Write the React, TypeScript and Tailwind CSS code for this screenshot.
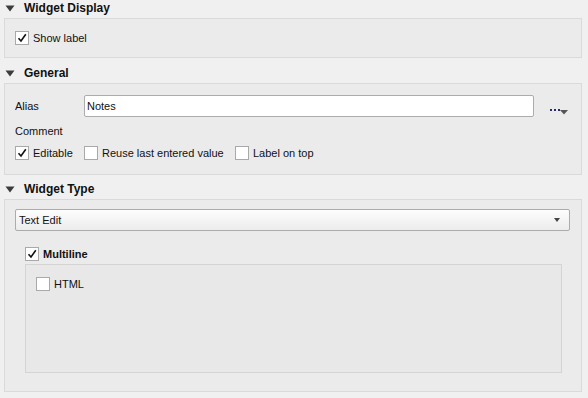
const font = { fontFamily: '"Liberation Sans", Arial, sans-serif' };

function Triangle() {
  return (
    <svg width="10" height="10" viewBox="0 0 10 10" className="shrink-0">
      <polygon points="0.5,1.5 9.5,1.5 5,7.5" fill="#3c3c3c" />
    </svg>
  );
}

function Check({ checked }: { checked: boolean }) {
  return (
    <span className="flex h-[14px] w-[14px] shrink-0 items-center justify-center border border-[#a9a9a9] bg-white">
      {checked && (
        <svg width="10" height="10" viewBox="0 0 10 10">
          <path d="M1.5 5.2 L4 8 L8.8 1.2" fill="none" stroke="#111" strokeWidth="1.6" />
        </svg>
      )}
    </span>
  );
}

function CheckRow({ label, checked, bold }: { label: string; checked: boolean; bold?: boolean }) {
  return (
    <div className="flex h-[14px] items-center gap-[4px] leading-[14px]">
      <Check checked={checked} />
      <span className={`text-[11px] text-[#111] ${bold ? "font-bold" : ""}`}>{label}</span>
    </div>
  );
}

function Header({ title }: { title: string }) {
  return (
    <div className="flex h-[15px] items-center gap-[9px] pl-[1px] pt-[2px] leading-[13px]">
      <Triangle />
      <span className="text-[12px] font-bold text-[#111]">{title}</span>
    </div>
  );
}

export default function App() {
  return (
    <div className="h-[398px] w-[588px] overflow-hidden bg-[#f0f0f0] pl-[4px] pr-[6px]" style={font}>
      {/* Widget Display */}
      <Header title="Widget Display" />
      <div className="mt-[3px] flex h-[40px] items-center border border-[#dadada] bg-[#ebebeb] pl-[10px]">
        <CheckRow label="Show label" checked />
      </div>

      {/* General */}
      <div className="mt-[7px]">
        <Header title="General" />
      </div>
      <div className="mt-[3px] h-[92px] border border-[#dadada] bg-[#ebebeb] pl-[10px] pt-[11px]">
        <div className="flex h-[22px] items-center">
          <span className="w-[69px] text-[11px] text-[#111]">Alias</span>
          <div className="flex h-[22px] w-[450px] items-center rounded-[2px] border border-[#acacac] bg-white px-[2px] text-[11px] text-[#111]">
            Notes
          </div>
          <div className="relative ml-[16px] h-[22px] w-[20px]">
            <div className="absolute left-0 top-[14px] flex gap-[2px]">
              <span className="h-[2px] w-[2px] bg-[#2a2a6a]" />
              <span className="h-[2px] w-[2px] bg-[#2a2a6a]" />
              <span className="h-[2px] w-[2px] bg-[#2a2a6a]" />
            </div>
            <svg className="absolute left-[10px] top-[15px]" width="8" height="5" viewBox="0 0 8 5">
              <polygon points="0,0 8,0 4,4.5" fill="#555" />
            </svg>
          </div>
        </div>
        <div className="mt-[7px] flex h-[14px] items-center text-[11px] text-[#111]">Comment</div>
        <div className="mt-[8px] flex h-[14px] items-center">
          <div className="w-[69px]">
            <CheckRow label="Editable" checked />
          </div>
          <div className="w-[151px]">
            <CheckRow label="Reuse last entered value" checked={false} />
          </div>
          <CheckRow label="Label on top" checked={false} />
        </div>
      </div>

      {/* Widget Type */}
      <div className="mt-[6px]">
        <Header title="Widget Type" />
      </div>
      <div className="mt-[3px] h-[193px] border border-[#dadada] bg-[#ebebeb] pl-[10px] pr-[11px] pt-[9px]">
        <div className="flex h-[22px] items-center justify-between rounded-[2px] border border-[#acacac] bg-gradient-to-b from-[#fdfdfd] to-[#ececec] pl-[3px] pr-[9px] text-[11px] text-[#111]">
          <span>Text Edit</span>
          <svg width="6" height="4" viewBox="0 0 6 4">
            <polygon points="0,0 6,0 3,4" fill="#444" />
          </svg>
        </div>
        <div className="ml-[10px] mr-[8px] mt-[16px]">
          <CheckRow label="Multiline" checked bold />
          <div className="mt-[3px] h-[109px] border border-[#d4d4d4] bg-[#e8e8e8] pl-[10px] pt-[12px]">
            <CheckRow label="HTML" checked={false} />
          </div>
        </div>
      </div>
    </div>
  );
}
